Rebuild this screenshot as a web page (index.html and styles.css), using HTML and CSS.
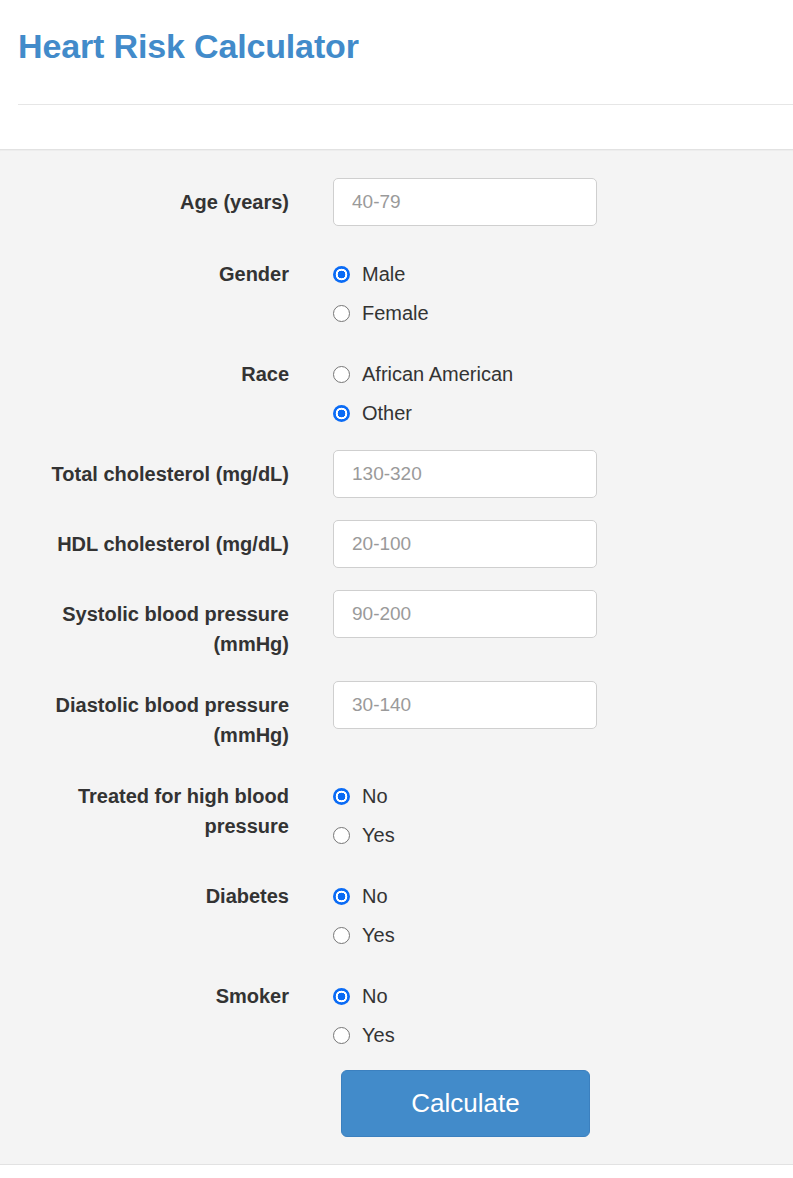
FILE: index.html
```html
<!DOCTYPE html>
<html lang="en">
<head>
<meta charset="utf-8">
<title>Heart Risk Calculator</title>
<link rel="stylesheet" href="styles.css">
</head>
<body>
<header class="page-header">
  <h1 class="title">Heart Risk Calculator</h1>
</header>
<main class="calc">
  <form class="form">
    <div class="group group-first">
      <label class="label" for="age">Age (years)</label>
      <div class="control"><input class="input" id="age" type="text" placeholder="40-79"></div>
    </div>
    <div class="group">
      <span class="label label-radio">Gender</span>
      <div class="control radios">
        <label class="radio"><input type="radio" name="gender" checked><span>Male</span></label>
        <label class="radio"><input type="radio" name="gender"><span>Female</span></label>
      </div>
    </div>
    <div class="group">
      <span class="label label-radio">Race</span>
      <div class="control radios">
        <label class="radio"><input type="radio" name="race"><span>African American</span></label>
        <label class="radio"><input type="radio" name="race" checked><span>Other</span></label>
      </div>
    </div>
    <div class="group">
      <label class="label" for="tc">Total cholesterol (mg/dL)</label>
      <div class="control"><input class="input" id="tc" type="text" placeholder="130-320"></div>
    </div>
    <div class="group">
      <label class="label" for="hdl">HDL cholesterol (mg/dL)</label>
      <div class="control"><input class="input" id="hdl" type="text" placeholder="20-100"></div>
    </div>
    <div class="group">
      <label class="label" for="sbp">Systolic blood pressure (mmHg)</label>
      <div class="control"><input class="input" id="sbp" type="text" placeholder="90-200"></div>
    </div>
    <div class="group">
      <label class="label" for="dbp">Diastolic blood pressure (mmHg)</label>
      <div class="control"><input class="input" id="dbp" type="text" placeholder="30-140"></div>
    </div>
    <div class="group">
      <span class="label label-radio">Treated for high blood pressure</span>
      <div class="control radios">
        <label class="radio"><input type="radio" name="treated" checked><span>No</span></label>
        <label class="radio"><input type="radio" name="treated"><span>Yes</span></label>
      </div>
    </div>
    <div class="group">
      <span class="label label-radio">Diabetes</span>
      <div class="control radios">
        <label class="radio"><input type="radio" name="diabetes" checked><span>No</span></label>
        <label class="radio"><input type="radio" name="diabetes"><span>Yes</span></label>
      </div>
    </div>
    <div class="group">
      <span class="label label-radio">Smoker</span>
      <div class="control radios">
        <label class="radio"><input type="radio" name="smoker" checked><span>No</span></label>
        <label class="radio"><input type="radio" name="smoker"><span>Yes</span></label>
      </div>
    </div>
    <div class="group group-last">
      <span class="label"></span>
      <div class="control actions">
        <button class="btn" type="button">Calculate</button>
      </div>
    </div>
  </form>
</main>
<footer class="page-foot"></footer>
</body>
</html>
```
FILE: styles.css
```css
* { box-sizing: border-box; }

html, body {
  margin: 0;
  padding: 0;
  background: #ffffff;
  font-family: "Liberation Sans", Arial, Helvetica, sans-serif;
  color: #333333;
}

.page-header {
  margin-left: 18px;
  padding-top: 28px;
  padding-bottom: 39px;
  border-bottom: 1px solid #e6e6e6;
  margin-bottom: 44px;
}

.title {
  margin: 0;
  font-size: 34px;
  line-height: 37px;
  font-weight: bold;
  color: #428bca;
  letter-spacing: -0.15px;
}

.calc {
  background: #f4f4f4;
  border-top: 1px solid #e2e2e2;
  border-bottom: 1px solid #e2e2e2;
  box-shadow: inset 0 1px 1px rgba(0, 0, 0, 0.03);
  padding: 28px 0 27px 0;
}

.form {
  display: flex;
  flex-direction: column;
  gap: 22px;
}

.group {
  display: grid;
  grid-template-columns: 249px 264px;
  column-gap: 44px;
  padding-left: 40px;
  align-items: start;
}

.group-first { margin-bottom: 2px; }

.group-last { margin-top: -2px; }

.label {
  display: block;
  text-align: right;
  font-size: 20px;
  font-weight: bold;
  line-height: 30px;
  padding-top: 9px;
  color: #333333;
}

.input {
  display: block;
  width: 264px;
  height: 48px;
  margin: 0;
  padding: 0 18px;
  border: 1px solid #cfcfcf;
  border-radius: 5px;
  background: #ffffff;
  font-family: "Liberation Sans", Arial, sans-serif;
  font-size: 19px;
  color: #555555;
  outline: none;
}

.input::placeholder { color: #9a9a9a; }

.radios {
  display: flex;
  flex-direction: column;
  gap: 9px;
  padding-top: 9px;
}

.radio {
  display: flex;
  align-items: center;
  height: 30px;
  font-size: 20px;
  color: #333333;
  cursor: pointer;
}

.radio input {
  appearance: none;
  -webkit-appearance: none;
  width: 17px;
  height: 17px;
  margin: 0 12px 0 0;
  border: 1.3px solid #767676;
  border-radius: 50%;
  background: #ffffff;
  flex: none;
}

.radio input:checked {
  border: none;
  background: radial-gradient(circle, #0a6bf5 0 3.6px, #ffffff 4.1px 5.6px, #0a6bf5 6.1px);
}

.actions {
  display: flex;
  justify-content: center;
}

.btn {
  width: 249px;
  height: 67px;
  margin-left: 1px;
  border: 1px solid #3b80bf;
  border-radius: 6px;
  background: #428bca;
  color: #ffffff;
  font-family: "Liberation Sans", Arial, sans-serif;
  font-size: 26px;
  cursor: pointer;
}

.page-foot { height: 12px; }
```
